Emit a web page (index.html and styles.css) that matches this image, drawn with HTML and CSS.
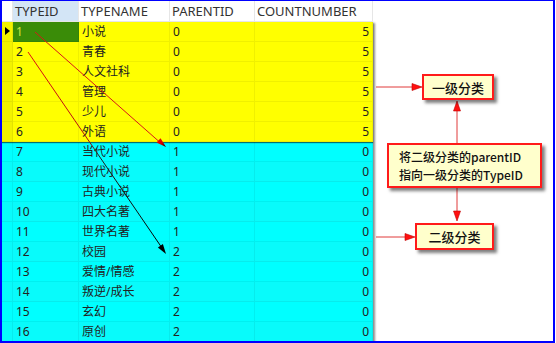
FILE: index.html
```html
<!DOCTYPE html>
<html lang="zh">
<head>
<meta charset="utf-8">
<title>TYPE table</title>
<link rel="stylesheet" href="styles.css">
</head>
<body>
<div class="frame">
  <div class="grid">
    <div class="row head">
      <div class="c ind"></div>
      <div class="c sel-col">TYPEID</div>
      <div class="c">TYPENAME</div>
      <div class="c">PARENTID</div>
      <div class="c">COUNTNUMBER</div>
    </div>
    <div class="body">
      <div class="group yellow">
        <div class="row"><div class="c ind"><span class="tri"></span></div><div class="c cur">1</div><div class="c">小说</div><div class="c">0</div><div class="c num">5</div></div>
        <div class="row"><div class="c ind"></div><div class="c">2</div><div class="c">青春</div><div class="c">0</div><div class="c num">5</div></div>
        <div class="row"><div class="c ind"></div><div class="c">3</div><div class="c">人文社科</div><div class="c">0</div><div class="c num">5</div></div>
        <div class="row"><div class="c ind"></div><div class="c">4</div><div class="c">管理</div><div class="c">0</div><div class="c num">5</div></div>
        <div class="row"><div class="c ind"></div><div class="c">5</div><div class="c">少儿</div><div class="c">0</div><div class="c num">5</div></div>
        <div class="row"><div class="c ind"></div><div class="c">6</div><div class="c">外语</div><div class="c">0</div><div class="c num">5</div></div>
      </div>
      <div class="group cyan">
        <div class="row"><div class="c ind"></div><div class="c">7</div><div class="c">当代小说</div><div class="c">1</div><div class="c num">0</div></div>
        <div class="row"><div class="c ind"></div><div class="c">8</div><div class="c">现代小说</div><div class="c">1</div><div class="c num">0</div></div>
        <div class="row"><div class="c ind"></div><div class="c">9</div><div class="c">古典小说</div><div class="c">1</div><div class="c num">0</div></div>
        <div class="row"><div class="c ind"></div><div class="c">10</div><div class="c">四大名著</div><div class="c">1</div><div class="c num">0</div></div>
        <div class="row"><div class="c ind"></div><div class="c">11</div><div class="c">世界名著</div><div class="c">1</div><div class="c num">0</div></div>
        <div class="row"><div class="c ind"></div><div class="c">12</div><div class="c">校园</div><div class="c">2</div><div class="c num">0</div></div>
        <div class="row"><div class="c ind"></div><div class="c">13</div><div class="c">爱情/情感</div><div class="c">2</div><div class="c num">0</div></div>
        <div class="row"><div class="c ind"></div><div class="c">14</div><div class="c">叛逆/成长</div><div class="c">2</div><div class="c num">0</div></div>
        <div class="row"><div class="c ind"></div><div class="c">15</div><div class="c">玄幻</div><div class="c">2</div><div class="c num">0</div></div>
        <div class="row"><div class="c ind"></div><div class="c">16</div><div class="c">原创</div><div class="c">2</div><div class="c num">0</div></div>
      </div>
    </div>
  </div>

  <svg class="overlay" width="556" height="343" viewBox="0 0 556 343" xmlns="http://www.w3.org/2000/svg">
    <defs>
      <linearGradient id="g2" gradientUnits="userSpaceOnUse" x1="28" y1="52" x2="166" y2="254">
        <stop offset="0" stop-color="#e01010"/>
        <stop offset="0.42" stop-color="#b01010"/>
        <stop offset="0.52" stop-color="#202020"/>
        <stop offset="1" stop-color="#000"/>
      </linearGradient>
      <linearGradient id="h1" gradientUnits="userSpaceOnUse" x1="157" y1="139" x2="166" y2="147">
        <stop offset="0" stop-color="#ff0000"/>
        <stop offset="0.55" stop-color="#d00000"/>
        <stop offset="1" stop-color="#000"/>
      </linearGradient>
    </defs>
    <line x1="35" y1="32" x2="159" y2="141.5" stroke="#d81818" stroke-width="1"/>
    <polygon points="166,147 156.5,142.6 160.5,138.2" fill="url(#h1)"/>
    <line x1="28" y1="52" x2="161" y2="246.5" stroke="url(#g2)" stroke-width="1"/>
    <polygon points="166,254 157.9,247.4 162.9,244" fill="#000"/>

    <g stroke="#e03a3a" stroke-width="1" fill="none">
      <line x1="376" y1="87" x2="413" y2="87"/>
      <line x1="457" y1="143" x2="457" y2="110"/>
      <line x1="457" y1="187" x2="457" y2="211"/>
      <line x1="376" y1="237" x2="406" y2="237"/>
    </g>
    <g fill="#ff1010" stroke="#c00000" stroke-width="0.6">
      <polygon points="422,87 412,83.5 412,90.5"/>
      <polygon points="457,101 453.5,111 460.5,111"/>
      <polygon points="457,221 453.5,211 460.5,211"/>
      <polygon points="415,237 405,233.5 405,240.5"/>
    </g>
  </svg>

  <div class="note n1">一级分类</div>
  <div class="note n2"><span class="ln">将二级分类的parentID</span><span class="ln">指向一级分类的TypeID</span></div>
  <div class="note n3">二级分类</div>
</div>
</body>
</html>
```
FILE: styles.css
```css
html, body {
  margin: 0;
  padding: 0;
  background: #ffffff;
}

.frame {
  position: relative;
  width: 555px;
  height: 343px;
  box-sizing: border-box;
  border-left: 2px solid #0000ff;
  border-right: 2px solid #0000ff;
  border-top: 1px solid #0000ff;
  border-bottom: 2px solid #0000ff;
  overflow: hidden;
  font-family: "Noto Sans", "Noto Sans CJK SC", sans-serif;
  font-size: 12px;
  color: #222222;
}

.grid {
  width: 371px;
}

.row {
  display: grid;
  grid-template-columns: 11px 66px 91px 85px 118px;
  height: 20px;
}

.c {
  box-sizing: border-box;
  height: 100%;
  padding: 0 3px;
  line-height: 19px;
  white-space: nowrap;
  overflow: hidden;
  border-right: 1px solid rgba(0, 0, 0, 0.06);
  border-bottom: 1px solid rgba(0, 0, 0, 0.06);
}

.head {
  height: 21px;
  background: #ffffff;
}

.head .c {
  line-height: 21px;
  font-size: 13px;
  color: #333333;
  border-right: 1px solid #e6e6e6;
  border-bottom: 1px solid #e6e6e6;
  padding-left: 2px;
}

.head .sel-col {
  background: #d3e5f6;
}

.body {
  box-shadow: 2px 1px 2px rgba(0, 0, 0, 0.45);
}

.group.yellow {
  position: relative;
  z-index: 1;
  background: #ffff00;
  box-shadow: 0 1px 1px rgba(0, 0, 0, 0.55);
}

.group.cyan {
  background: #00ffff;
}

.group.cyan .row:nth-child(even) {
  background: #08fbfb;
}

.c.num {
  text-align: right;
  padding-right: 3px;
}

.c.ind {
  padding: 0;
  position: relative;
}

.yellow .c.ind {
  background: #f2f200;
}

.c.cur {
  background: #3a8c08;
  color: #cfe640;
}

.tri {
  position: absolute;
  left: 3px;
  top: 5px;
  width: 0;
  height: 0;
  border-top: 4.5px solid transparent;
  border-bottom: 4.5px solid transparent;
  border-left: 5px solid #000000;
}

.overlay {
  position: absolute;
  left: -2px;
  top: -1px;
  z-index: 5;
  pointer-events: none;
}

.note {
  position: absolute;
  z-index: 6;
  box-sizing: border-box;
  background: #ffffcc;
  border: 2px solid #ff1a1a;
  box-shadow: 3px 3px 3px rgba(0, 0, 0, 0.5);
  font-family: "Noto Sans CJK SC", "Noto Sans", sans-serif;
  font-size: 13px;
  font-weight: 500;
  color: #111111;
  display: flex;
  align-items: center;
  justify-content: center;
}

.n1 {
  left: 420px;
  top: 73px;
  width: 72px;
  height: 26px;
}

.n2 {
  left: 385px;
  top: 142px;
  width: 155px;
  height: 45px;
  flex-direction: column;
  align-items: flex-start;
  justify-content: center;
  padding-left: 10px;
  font-size: 12px;
}

.n2 .ln {
  display: block;
  line-height: 17.5px;
  height: 17.5px;
}

.n3 {
  left: 413px;
  top: 222px;
  width: 79px;
  height: 27px;
}
```
